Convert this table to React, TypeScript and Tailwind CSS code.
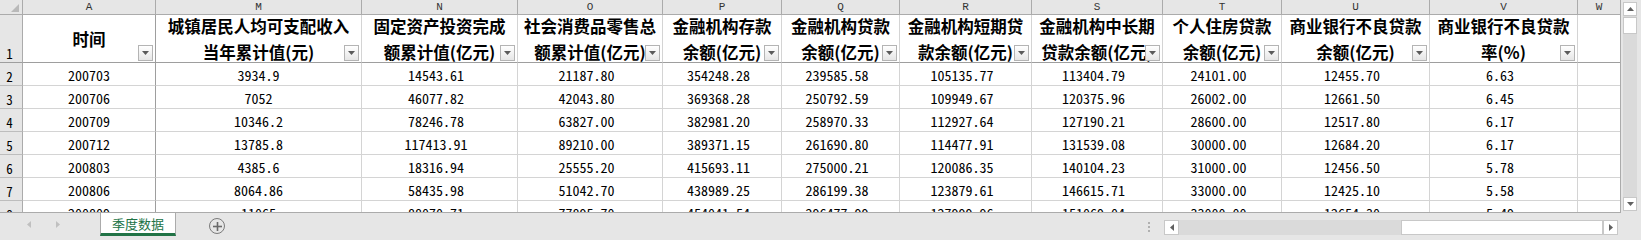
import React from 'react';

const MONO = { fontFamily: '"Noto Sans Mono CJK SC", "Liberation Mono", monospace' };

type Col = { l: string; h: string[]; pad: boolean };
const cols: Col[] = [
  { l: 'A', h: ['时间'], pad: false },
  { l: 'M', h: ['城镇居民人均可支配收入', '当年累计值(元)'], pad: false },
  { l: 'N', h: ['固定资产投资完成', '额累计值(亿元)'], pad: true },
  { l: 'O', h: ['社会消费品零售总', '额累计值(亿元)'], pad: true },
  { l: 'P', h: ['金融机构存款', '余额(亿元)'], pad: true },
  { l: 'Q', h: ['金融机构贷款', '余额(亿元)'], pad: true },
  { l: 'R', h: ['金融机构短期贷', '款余额(亿元)'], pad: true },
  { l: 'S', h: ['金融机构中长期', '贷款余额(亿元)'], pad: true },
  { l: 'T', h: ['个人住房贷款', '余额(亿元)'], pad: true },
  { l: 'U', h: ['商业银行不良贷款', '余额(亿元)'], pad: true },
  { l: 'V', h: ['商业银行不良贷款', '率(%)'], pad: true },
];

const rows: string[][] = [
  ['200703', '3934.9', '14543.61', '21187.80', '354248.28', '239585.58', '105135.77', '113404.79', '24101.00', '12455.70', '6.63'],
  ['200706', '7052', '46077.82', '42043.80', '369368.28', '250792.59', '109949.67', '120375.96', '26002.00', '12661.50', '6.45'],
  ['200709', '10346.2', '78246.78', '63827.00', '382981.20', '258970.33', '112927.64', '127190.21', '28600.00', '12517.80', '6.17'],
  ['200712', '13785.8', '117413.91', '89210.00', '389371.15', '261690.80', '114477.91', '131539.08', '30000.00', '12684.20', '6.17'],
  ['200803', '4385.6', '18316.94', '25555.20', '415693.11', '275000.21', '120086.35', '140104.23', '31000.00', '12456.50', '5.78'],
  ['200806', '8064.86', '58435.98', '51042.70', '438989.25', '286199.38', '123879.61', '146615.71', '33000.00', '12425.10', '5.58'],
  ['200809', '11065', '88070.71', '77895.70', '454041.54', '296477.99', '127999.96', '151069.04', '33000.00', '12654.30', '5.49'],
];

function FilterBtn() {
  return (
    <div className="absolute right-[2px] bottom-[1px] w-[15px] h-[16px] border border-[#b4b4b4] bg-linear-to-b from-white to-[#e6e6e6] flex items-center justify-center">
      <svg width="7" height="4" viewBox="0 0 7 4">
        <polygon points="0,0 7,0 3.5,4" fill="#5a5a5a" />
      </svg>
    </div>
  );
}

function Tri({ dir, color }: { dir: 'up' | 'down' | 'left' | 'right'; color: string }) {
  const pts =
    dir === 'up' ? '0,4 7,4 3.5,0' : dir === 'down' ? '0,0 7,0 3.5,4' : dir === 'left' ? '4,0 4,7 0,3.5' : '0,0 0,7 4,3.5';
  const w = dir === 'up' || dir === 'down' ? 7 : 4;
  const h = dir === 'up' || dir === 'down' ? 4 : 7;
  return (
    <svg width={w} height={h} viewBox={`0 0 ${w} ${h}`}>
      <polygon points={pts} fill={color} />
    </svg>
  );
}

export default function App() {
  return (
    <div className="w-[1641px] h-[240px] bg-[#e6e6e6] flex flex-col overflow-hidden select-none">
      <div className="flex h-[213px]">
        {/* Sheet */}
        <div className="w-[1621px] h-[213px] border-r border-b border-[#ababab] bg-white overflow-hidden">
          <div className="grid grid-cols-[23px_133px_206px_156px_145px_119px_118px_132px_131px_119px_148px_148px_1fr] grid-rows-[15px_48px_repeat(7,23px)]">
            {/* corner */}
            <div className="relative bg-[#e6e6e6] border-r border-b border-[#ababab]">
              <svg className="absolute right-[3px] bottom-[2px]" width="8" height="8" viewBox="0 0 8 8">
                <polygon points="8,0 8,8 0,8" fill="#b9b9b9" />
              </svg>
            </div>
            {cols.map((c) => (
              <div
                key={c.l}
                className="bg-[#e6e6e6] border-r border-b border-[#ababab] flex items-center justify-center text-[11px] leading-none text-[#333]"
                style={{ fontFamily: '"Liberation Mono", monospace' }}
              >
                {c.l}
              </div>
            ))}
            <div
              className="bg-[#e6e6e6] border-b border-[#ababab] flex items-center justify-center text-[11px] leading-none text-[#333]"
              style={{ fontFamily: '"Liberation Mono", monospace' }}
            >
              W
            </div>

            {/* header row 1 */}
            <div className="bg-[#e6e6e6] border-r border-b border-r-[#ababab] border-b-[#9e9e9e] flex items-end justify-center pr-[3px] text-[13px] leading-[16px] text-black" style={MONO}>
              1
            </div>
            {cols.map((c, i) => (
              <div
                key={c.l}
                className={`relative border-b border-b-[#9e9e9e] border-r ${i === 0 ? 'border-r-[#9e9e9e]' : 'border-r-[#d4d4d4]'} flex flex-col items-center justify-center text-[16.5px] leading-[26px] font-bold text-black whitespace-nowrap`}
                style={{ fontFamily: '"Noto Sans CJK SC", sans-serif' }}
              >
                {c.h.map((t) => (
                  <span key={t}>{t}</span>
                ))}
                <FilterBtn />
              </div>
            ))}
            <div className="border-b border-b-[#9e9e9e]" />

            {/* data rows */}
            {rows.map((r, ri) => (
              <React.Fragment key={ri}>
                <div className="bg-[#e6e6e6] border-r border-b border-r-[#ababab] border-b-[#bdbdbd] flex items-end justify-center pr-[3px] text-[13px] leading-[17px] text-black" style={MONO}>
                  {ri + 2}
                </div>
                {r.map((v, ci) => (
                  <div
                    key={ci}
                    className={`border-b border-b-[#d4d4d4] border-r ${ci === 0 ? 'border-r-[#9e9e9e]' : 'border-r-[#d4d4d4]'} flex items-center justify-center pt-[1px] text-[14px] leading-none text-black whitespace-nowrap ${cols[ci].pad ? 'pr-[7px]' : ''}`}
                    style={MONO}
                  >
                    {v}
                  </div>
                ))}
                <div className="border-b border-b-[#d4d4d4]" />
              </React.Fragment>
            ))}
          </div>
        </div>

        {/* vertical scrollbar */}
        <div className="w-[20px] h-[213px] pl-[2px] pt-[2px] pb-[2px] pr-[4px]">
          <div className="h-full bg-[#dadada] flex flex-col">
            <div className="h-[14px] bg-white border border-[#c8c8c8] flex items-center justify-center">
              <Tri dir="up" color="#606060" />
            </div>
            <div className="mt-[1px] h-[17px] bg-white border border-[#c8c8c8]" />
            <div className="flex-1" />
            <div className="h-[14px] bg-white border border-[#c8c8c8] flex items-center justify-center">
              <Tri dir="down" color="#606060" />
            </div>
          </div>
        </div>
      </div>

      {/* bottom bar */}
      <div className="flex h-[27px] items-start">
        <div className="w-[100px] h-[22px] flex items-center pl-[27px] gap-[25px]">
          <Tri dir="left" color="#c0c0c0" />
          <Tri dir="right" color="#c0c0c0" />
        </div>
        <div
          className="w-[76px] h-[23px] bg-white border-x border-[#ababab] border-b-[3px] border-b-[#217346] flex items-center justify-center text-[13px] text-[#217346] leading-none"
          style={{ fontFamily: '"Noto Sans CJK SC", sans-serif' }}
        >
          季度数据
        </div>
        <div className="ml-[33px] mt-[5px] w-[16px] h-[16px] rounded-full border-[1.5px] border-[#7a7a7a] flex items-center justify-center">
          <svg width="9" height="9" viewBox="0 0 9 9">
            <rect x="3.7" y="0" width="1.6" height="9" fill="#6a6a6a" />
            <rect x="0" y="3.7" width="9" height="1.6" fill="#6a6a6a" />
          </svg>
        </div>
        <div className="flex-1" />
        <div className="mt-[9px] w-[2px] flex flex-col gap-[2px]">
          <div className="w-[2px] h-[2px] bg-[#b0b0b0]" />
          <div className="w-[2px] h-[2px] bg-[#b0b0b0]" />
          <div className="w-[2px] h-[2px] bg-[#b0b0b0]" />
        </div>
        <div className="ml-[14px] mr-[23px] mt-[7px] w-[454px] h-[15px] flex bg-[#dadada]">
          <div className="w-[15px] h-full bg-white border border-[#c8c8c8] flex items-center justify-center">
            <Tri dir="left" color="#606060" />
          </div>
          <div className="flex-1" />
          <div className="w-[202px] h-full bg-white border border-[#c8c8c8]" />
          <div className="w-[15px] h-full bg-white border border-[#c8c8c8] flex items-center justify-center">
            <Tri dir="right" color="#606060" />
          </div>
        </div>
      </div>
    </div>
  );
}
